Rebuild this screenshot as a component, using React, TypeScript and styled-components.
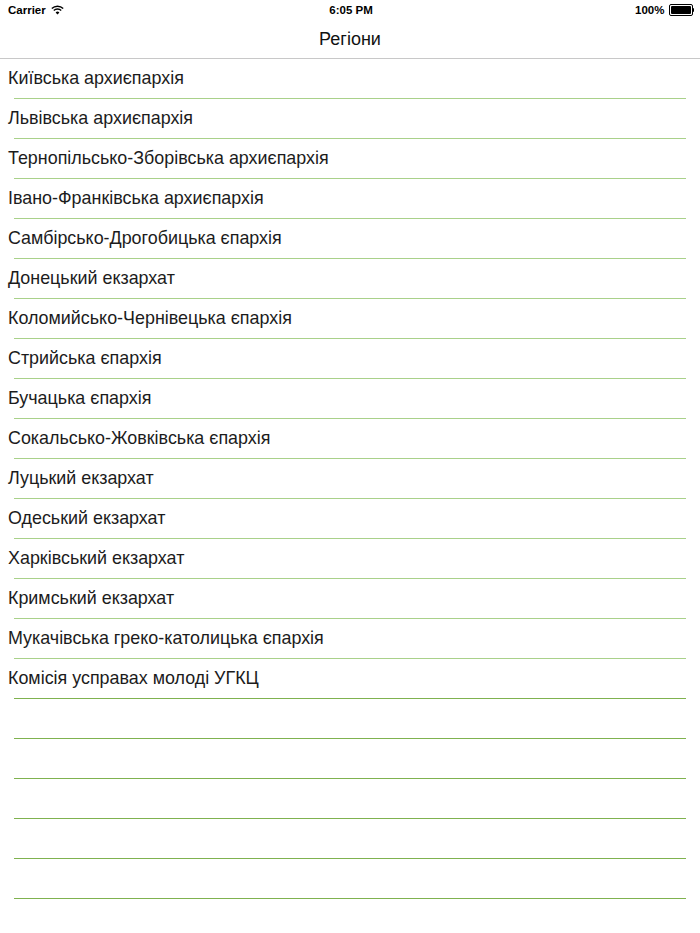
import styled, { createGlobalStyle } from "styled-components";

const GlobalStyle = createGlobalStyle`
    html, body {
        margin: 0;
        padding: 0;
        background: #ffffff;
    }
    body {
        font-family: "Liberation Sans", Arial, sans-serif;
        color: #000;
    }
`;

const Screen = styled.div`
    width: 700px;
    height: 933px;
    overflow: hidden;
    background: #fff;
`;

const StatusBar = styled.div`
    height: 20px;
    display: grid;
    grid-template-columns: 1fr auto 1fr;
    align-items: center;
    padding: 0 6px 0 8px;
    font-size: 11.5px;
    font-weight: bold;
`;

const StatusLeft = styled.div`
    display: flex;
    align-items: center;
    gap: 5px;
`;

const StatusRight = styled.div`
    display: flex;
    align-items: center;
    justify-content: flex-end;
    gap: 4px;
`;

const Battery = styled.div`
    display: flex;
    align-items: center;
`;

const BatteryBody = styled.div`
    width: 20px;
    height: 8px;
    border: 1px solid #000;
    border-radius: 2px;
    padding: 1px;
    box-sizing: content-box;
    &::after {
        content: "";
        display: block;
        width: 100%;
        height: 100%;
        background: #000;
        border-radius: 1px;
    }
`;

const BatteryTip = styled.div`
    width: 1.5px;
    height: 4px;
    background: #000;
    border-radius: 0 1px 1px 0;
`;

const NavBar = styled.div`
    height: 38px;
    display: flex;
    align-items: center;
    justify-content: center;
    border-bottom: 1px solid #c8c8c8;
    font-size: 18px;
    color: #111;
`;

const List = styled.div`
    display: flex;
    flex-direction: column;
`;

const Row = styled.div<{ $line: string }>`
    height: 40px;
    box-sizing: border-box;
    position: relative;
    display: flex;
    align-items: center;
    padding: 0 8px 2px;
    font-size: 17.9px;
    color: #1c1c1c;
    &::after {
        content: "";
        position: absolute;
        left: 14px;
        right: 14px;
        bottom: 0;
        height: 1px;
        background: ${(p) => p.$line};
    }
`;

const regions = [
    "Київська архиєпархія",
    "Львівська архиєпархія",
    "Тернопільсько-Зборівська архиєпархія",
    "Івано-Франківська архиєпархія",
    "Самбірсько-Дрогобицька єпархія",
    "Донецький екзархат",
    "Коломийсько-Чернівецька єпархія",
    "Стрийська єпархія",
    "Бучацька єпархія",
    "Сокальсько-Жовківська єпархія",
    "Луцький екзархат",
    "Одеський екзархат",
    "Харківський екзархат",
    "Кримський екзархат",
    "Мукачівська греко-католицька єпархія",
    "Комісія усправах молоді УГКЦ",
];

const Wifi = () => (
    <svg width="13" height="10" viewBox="0 0 13 10">
        <path d="M0.8 3.6 A8 8 0 0 1 12.2 3.6" stroke="#000" strokeWidth="1.4" fill="none" />
        <path d="M2.8 5.6 A5.2 5.2 0 0 1 10.2 5.6" stroke="#000" strokeWidth="1.4" fill="none" />
        <path d="M4.6 7.5 L6.5 9.6 L8.4 7.5 A2.6 2.6 0 0 0 4.6 7.5 Z" fill="#000" />
    </svg>
);

export default function App() {
    return (
        <Screen>
            <GlobalStyle />
            <StatusBar>
                <StatusLeft>
                    <span>Carrier</span>
                    <Wifi />
                </StatusLeft>
                <span>6:05 PM</span>
                <StatusRight>
                    <span>100%</span>
                    <Battery>
                        <BatteryBody />
                        <BatteryTip />
                    </Battery>
                </StatusRight>
            </StatusBar>
            <NavBar>Регіони</NavBar>
            <List>
                {regions.map((name, i) => (
                    <Row key={name} $line={i < 15 ? "#a9d18a" : "#7fb24f"}>
                        {name}
                    </Row>
                ))}
                {Array.from({ length: 5 }).map((_, i) => (
                    <Row key={"empty" + i} $line="#7fb24f" />
                ))}
            </List>
        </Screen>
    );
}
